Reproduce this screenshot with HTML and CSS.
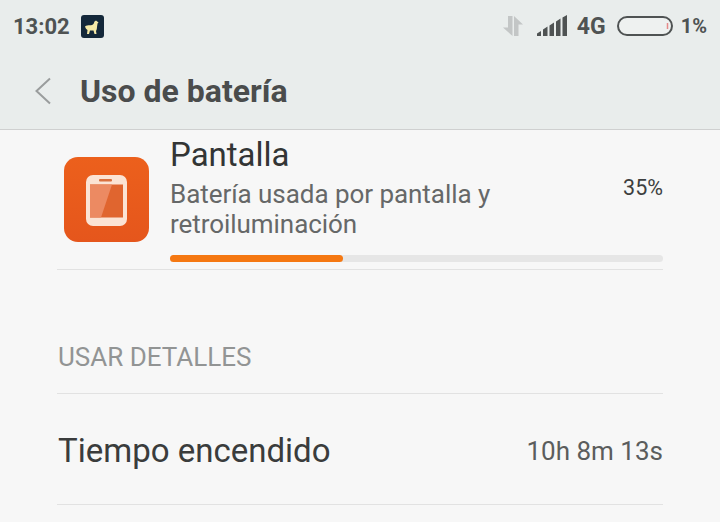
FILE: index.html
```html
<!DOCTYPE html>
<html lang="es">
<head>
<meta charset="utf-8">
<title>Uso de batería</title>
<link rel="stylesheet" href="styles.css">
</head>
<body>
<header class="top">
  <div class="status">
    <span class="time">13:02</span>
    <svg class="app" width="23" height="23" viewBox="0 0 23 23"><rect width="23" height="23" rx="3" fill="#14283a"/><path d="M4 11.500C6 9.500 9 10.500 11 10c1.500-.5 2-2 2.500-3.500l1.500-1 2.500 2-1 1-.5 3.500c0 2-.5 3-1 4l.5 3h-2l-1-3.500H9L8 19H6l.5-4C5 14 4.500 13 4 11.500z" fill="#f6eaa8"/></svg>
    <span class="spacer"></span>
    <svg class="arrows" width="22" height="22" viewBox="0 0 22 22"><path d="M10.500 1v20L1 12.500h5V1zM12 21V1l9 8.500h-4.500V21z" fill="#c3c6c6" fill-rule="evenodd"/></svg>
    <svg class="signal" width="32" height="22" viewBox="0 0 32 22"><path d="M1 21v-2.500l4-2.500v5zM7 21v-6.500l4.500-3V21zM13.500 21V10.500l4.500-3V21zM20 21V6.500l4.500-3V21zM26.500 21V2.500L31 0v21z" fill="#4f5353"/></svg>
    <span class="net">4G</span>
    <svg class="battery" width="56" height="22" viewBox="0 0 56 22"><rect x="1" y="2" width="54" height="18" rx="9" fill="#eef1f0" stroke="#4f5353" stroke-width="2"/><path d="M50.500 8v6" stroke="#e58a8a" stroke-width="1.500"/></svg>
    <span class="pct">1%</span>
  </div>
  <div class="bar">
    <svg class="back" width="18" height="28" viewBox="0 0 18 28"><path d="M16 1.500 2.500 14 16 26.500" fill="none" stroke="#9a9d9d" stroke-width="2"/></svg>
    <h1>Uso de batería</h1>
  </div>
</header>
<main class="content">
  <section class="item">
    <div class="icon">
      <svg width="85" height="85" viewBox="0 0 85 85"><defs><linearGradient id="g" x1="0" y1="0" x2="0" y2="1"><stop offset="0" stop-color="#ec601c"/><stop offset="1" stop-color="#e5561c"/></linearGradient></defs><rect width="85" height="85" rx="14" fill="url(#g)"/><rect x="22" y="18" width="41" height="51" rx="7" fill="#fbe3d4"/><rect x="35" y="22" width="13" height="2.500" rx="1" fill="#d9703f"/><rect x="26" y="27.500" width="33" height="33" fill="#e0652f"/><path d="M26 27.500h22L37 60.500H26z" fill="#ec8a62"/></svg>
    </div>
    <div class="info">
      <div class="name">Pantalla</div>
      <div class="row">
        <div class="desc">Batería usada por pantalla y<br>retroiluminación</div>
        <div class="value">35%</div>
      </div>
      <div class="track"><div class="fill" style="width:35%"></div></div>
    </div>
  </section>
  <h2 class="section">USAR DETALLES</h2>
  <div class="detail">
    <span class="label">Tiempo encendido</span>
    <span class="amount">10h 8m 13s</span>
  </div>
</main>
</body>
</html>
```
FILE: styles.css
```css
* { box-sizing: border-box; }
html, body { margin: 0; height: 100%; }
body {
  width: 720px;
  height: 522px;
  overflow: hidden;
  background: #f7f7f7;
  font-family: Roboto, "Noto Sans", sans-serif;
  color: #3d3f3f;
}
.top {
  height: 130px;
  background: #e9edec;
  border-bottom: 1px solid #cfd0d0;
}
.status {
  height: 52px;
  display: flex;
  align-items: center;
  padding: 0 13px 0 13px;
  color: #4f5353;
  font-weight: 700;
  font-size: 22px;
}
.app { margin-left: 11px; }
.spacer { flex: 1; }
.arrows { margin-right: 12px; }
.signal { margin-right: 9px; }
.net { font-size: 23px; margin-right: 11px; }
.battery { margin-right: 8px; }
.pct { font-size: 20px; }
.bar {
  height: 77px;
  display: flex;
  align-items: center;
  padding: 0 0 0 34px;
}
.back { margin-right: 28px; }
h1 {
  margin: 0;
  font-size: 32px;
  font-weight: 700;
  color: #4a4c4c;
}
.content { padding: 0 57px 0 57px; }
.item {
  height: 140px;
  display: flex;
  border-bottom: 1px solid #e2e2e2;
  padding-left: 7px;
}
.icon { margin-top: 27px; width: 85px; height: 85px; }
.info { flex: 1; margin-left: 21px; }
.name { font-size: 33px; line-height: 44px; margin-top: 3px; color: #333535; }
.row { display: flex; justify-content: space-between; align-items: flex-start; }
.desc { font-size: 26px; line-height: 30px; color: #666868; margin-top: 2px; letter-spacing: -0.05px; }
.value { font-size: 21.500px; line-height: 22px; color: #3d3f3f; }
.track { height: 7px; margin-top: 16px; background: #e6e6e6; border-radius: 4px; }
.fill { height: 100%; background: #f57812; border-radius: 4px; }
.section {
  margin: 0;
  height: 124px;
  border-bottom: 1px solid #e2e2e2;
  padding: 70px 0 0 1px;
  font-size: 26px;
  line-height: 34px;
  font-weight: 400;
  color: #929494;
}
.detail {
  height: 111px;
  display: flex;
  justify-content: space-between;
  align-items: center;
  border-bottom: 1px solid #e2e2e2;
  padding: 3px 0 0 1px;
}
.label { font-size: 33px; color: #3a3c3c; }
.amount { font-size: 26px; color: #5b5d5d; }
```
